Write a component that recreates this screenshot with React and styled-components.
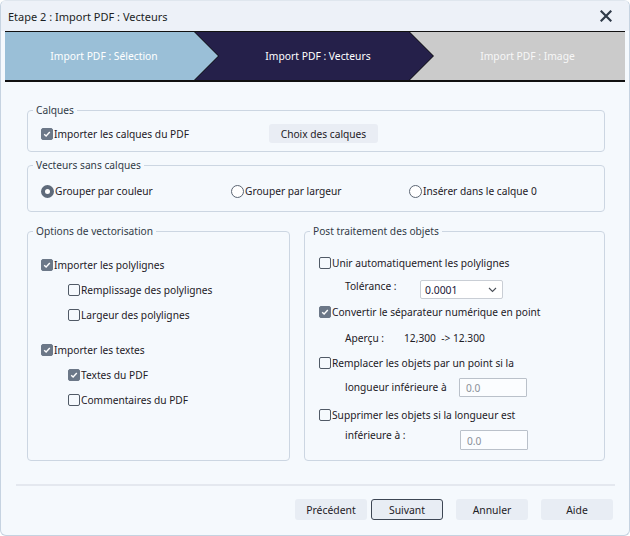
import React from 'react';
import styled, { createGlobalStyle } from 'styled-components';

const FONT = `"Noto Sans", "Segoe UI", "Liberation Sans", sans-serif`;

const GlobalStyle = createGlobalStyle`
  html, body { margin: 0; padding: 0; background: #ffffff; }
  body { font-family: ${FONT}; font-size: 10.2px; color: #1d2026; }
  * { box-sizing: border-box; }
`;

const Window = styled.div`
  width: 630px;
  height: 536px;
  background: #f5f9fd;
  border: 1px solid #c6d3e1;
  border-top-color: #dfe6ee;
  border-radius: 6px;
  overflow: hidden;
  display: flex;
  flex-direction: column;
`;

const TitleBar = styled.div`
  height: 30px;
  flex: none;
  background: #edf1f8;
  display: flex;
  align-items: center;
  justify-content: space-between;
  padding: 0 17px 0 7px;
`;

const Title = styled.div`
  font-size: 11px;
  color: #1b1e24;
`;

const CloseIcon = () => (
  <svg width="12" height="12" viewBox="0 0 12 12">
    <path d="M1.5 1.5 L10.5 10.5 M10.5 1.5 L1.5 10.5" stroke="#2f3a48" strokeWidth="2.2" strokeLinecap="square" />
  </svg>
);

const StepBar = styled.div`
  margin: 0 4px;
  height: 51px;
  flex: none;
  display: flex;
  background: #111;
  border-top: 1px solid #111;
  border-bottom: 2px solid #111;
`;

const Step = styled.div`
  height: 48px;
  width: ${(p) => (p.$w ? `${p.$w}px` : 'auto')};
  flex: ${(p) => (p.$w ? 'none' : '1')};
  margin-left: ${(p) => (p.$first ? 0 : -23)}px;
  background: ${(p) => p.$bg};
  color: ${(p) => p.$color};
  display: flex;
  align-items: center;
  justify-content: center;
  padding-left: ${(p) => (p.$first ? 0 : 20)}px;
  padding-right: ${(p) => (p.$last ? 0 : p.$first ? 15 : 12)}px;
  font-size: 10.3px;
  clip-path: ${(p) => {
    const notch = p.$first ? '' : ', 24px 50%';
    const right = p.$last
      ? '100% 0, 100% 100%'
      : 'calc(100% - 24px) 0, 100% 50%, calc(100% - 24px) 100%';
    return `polygon(0 0, ${right}, 0 100%${notch})`;
  }};
`;

const Content = styled.div`
  padding: 21px 24px 0 26px;
  display: flex;
  flex-direction: column;
`;

const Group = styled.fieldset`
  margin: ${(p) => p.$mt || 0}px 0 0 0;
  border: 1px solid #ccd6e2;
  border-radius: 4px;
  padding: ${(p) => p.$pt}px 10px ${(p) => p.$pb}px ${(p) => p.$pl}px;
  min-width: 0;
`;

const Legend = styled.legend`
  padding: 0 3px;
  margin-left: ${(p) => 5 - p.$pl}px;
  line-height: 14px;
  font-size: 10.2px;
  color: #323b47;
`;

const Panel = ({ title, pt, pb, pl, mt, children }) => (
  <Group $pt={pt} $pb={pb} $pl={pl} $mt={mt}>
    <Legend $pl={pl}>{title}</Legend>
    {children}
  </Group>
);

const Row = styled.div`
  display: flex;
  align-items: center;
  height: ${(p) => p.$h || 20}px;
  margin-top: ${(p) => p.$mt || 0}px;
  padding-left: ${(p) => p.$indent || 0}px;
`;

const RadioGrid = styled.div`
  display: grid;
  grid-template-columns: 190px 178px 1fr;
  align-items: center;
  height: 20px;
`;

const Option = styled.label`
  display: flex;
  align-items: center;
  gap: 1px;
  line-height: 14px;
  white-space: nowrap;
`;

const Box = styled.span`
  width: 12px;
  height: 12px;
  flex: none;
  border-radius: 2px;
  border: 1px solid ${(p) => (p.$checked ? '#6c7888' : '#505a66')};
  background: ${(p) => (p.$checked ? '#6c7888' : 'transparent')};
  display: flex;
  align-items: center;
  justify-content: center;
`;

const Check = ({ checked, children }) => (
  <Option>
    <Box $checked={checked}>
      {checked && (
        <svg width="10" height="10" viewBox="0 0 10 10">
          <path d="M2.2 5.2 L4.1 7 L7.8 3" fill="none" stroke="#fff" strokeWidth="1.4" />
        </svg>
      )}
    </Box>
    {children}
  </Option>
);

const RadioDot = styled.span`
  width: 13px;
  height: 13px;
  flex: none;
  border-radius: 50%;
  border: ${(p) => (p.$checked ? '4px solid #5f6b7b' : '1px solid #5b6573')};
  background: #ffffff;
`;

const Radio = ({ checked, children }) => (
  <Option>
    <RadioDot $checked={checked} />
    {children}
  </Option>
);

const SmallButton = styled.button`
  margin-left: 80px;
  width: 109px;
  height: 19px;
  border: none;
  border-radius: 3px;
  background: #e9edf4;
  font-family: ${FONT};
  font-size: 10.2px;
  color: #1d2026;
  padding: 0;
`;

const Columns = styled.div`
  margin-top: 12px;
  display: grid;
  grid-template-columns: 263px 1fr;
  column-gap: 14px;
  align-items: stretch;
`;

const FieldLabel = styled.span`
  width: ${(p) => p.$w}px;
  flex: none;
  line-height: 14px;
  align-self: ${(p) => (p.$top !== undefined ? 'flex-start' : 'center')};
  margin-top: ${(p) => p.$top || 0}px;
  white-space: nowrap;
`;

const Value = styled.span`
  white-space: pre;
`;

const SelectBox = styled.div`
  width: 83px;
  height: 19px;
  border: 1px solid #c9ced5;
  border-radius: 2px;
  background: #ffffff;
  display: flex;
  align-items: center;
  justify-content: space-between;
  padding: 1px 5px 0 4px;
  color: #1a1638;
  font-size: 10.4px;
`;

const TextInput = styled.input`
  width: 68px;
  height: ${(p) => p.$h || 19}px;
  border: 1px solid #bac1ca;
  border-radius: 1px;
  background: #fbfdff;
  color: #8a9099;
  font-family: ${FONT};
  font-size: 10.2px;
  padding: 1px 0 0 6px;
  outline: none;
`;

const Separator = styled.div`
  margin: 23px 14px 0 15px;
  height: 2px;
  background: #e4e8ef;
  flex: none;
`;

const Footer = styled.div`
  display: flex;
  justify-content: flex-end;
  padding: 13px 16px 0 0;
`;

const Button = styled.button`
  width: 72px;
  height: 21px;
  margin-left: ${(p) => p.$ml || 0}px;
  border: 1px solid ${(p) => (p.$primary ? '#3d4654' : 'transparent')};
  border-radius: 3px;
  background: #e8edf4;
  font-family: ${FONT};
  font-size: 10.4px;
  color: #1d2026;
  padding: 0;
`;

export default function App() {
  return (
    <>
      <GlobalStyle />
      <Window>
        <TitleBar>
          <Title>Etape 2 : Import PDF : Vecteurs</Title>
          <CloseIcon />
        </TitleBar>
        <StepBar>
          <Step $first $w={213} $bg="#9abfd7" $color="#ffffff">Import PDF : Sélection</Step>
          <Step $w={238} $bg="#25204a" $color="#ffffff">Import PDF : Vecteurs</Step>
          <Step $last $bg="#cbcbcb" $color="#f7f7f7">Import PDF : Image</Step>
        </StepBar>
        <Content>
          <Panel title="Calques" pt={7} pb={8} pl={13}>
            <Row $h={19}>
              <Check checked>Importer les calques du PDF</Check>
              <SmallButton>Choix des calques</SmallButton>
            </Row>
          </Panel>
          <Panel title="Vecteurs sans calques" mt={6} pt={9} pb={10} pl={13}>
            <RadioGrid>
              <Radio checked>Grouper par couleur</Radio>
              <Radio>Grouper par largeur</Radio>
              <Radio>Insérer dans le calque 0</Radio>
            </RadioGrid>
          </Panel>
          <Columns>
            <Panel title="Options de vectorisation" pt={14} pb={0} pl={13}>
              <Row $h={25}><Check checked>Importer les polylignes</Check></Row>
              <Row $h={25} $indent={27}><Check>Remplissage des polylignes</Check></Row>
              <Row $h={25} $indent={27}><Check>Largeur des polylignes</Check></Row>
              <Row $h={25} $mt={10}><Check checked>Importer les textes</Check></Row>
              <Row $h={25} $indent={27}><Check checked>Textes du PDF</Check></Row>
              <Row $h={25} $indent={27}><Check>Commentaires du PDF</Check></Row>
            </Panel>
            <Panel title="Post traitement des objets" pt={15} pb={10} pl={14}>
              <Row><Check>Unir automatiquement les polylignes</Check></Row>
              <Row $h={26} $mt={3} $indent={26}>
                <FieldLabel $w={75} $top={2.5}>Tolérance :</FieldLabel>
                <SelectBox>
                  <span>0.0001</span>
                  <svg width="9" height="6" viewBox="0 0 9 6">
                    <path d="M1 1 L4.5 4.5 L8 1" fill="none" stroke="#4a4f58" strokeWidth="1.1" />
                  </svg>
                </SelectBox>
              </Row>
              <Row><Check checked>Convertir le séparateur numérique en point</Check></Row>
              <Row $mt={6} $indent={26}>
                <FieldLabel $w={59}>Aperçu :</FieldLabel>
                <Value>12,300  -&gt; 12.300</Value>
              </Row>
              <Row $mt={5}><Check>Remplacer les objets par un point si la</Check></Row>
              <Row $h={22} $mt={3} $indent={26}>
                <FieldLabel $w={114}>longueur inférieure à</FieldLabel>
                <TextInput readOnly value="0.0" />
              </Row>
              <Row $mt={7}><Check>Supprimer les objets si la longueur est</Check></Row>
              <Row $mt={5} $indent={26}>
                <FieldLabel $w={115} $top={-2}>inférieure à :</FieldLabel>
                <TextInput $h={20} readOnly value="0.0" />
              </Row>
            </Panel>
          </Columns>
        </Content>
        <Separator />
        <Footer>
          <Button>Précédent</Button>
          <Button $primary $ml={4}>Suivant</Button>
          <Button $ml={13}>Annuler</Button>
          <Button $ml={13}>Aide</Button>
        </Footer>
      </Window>
    </>
  );
}
